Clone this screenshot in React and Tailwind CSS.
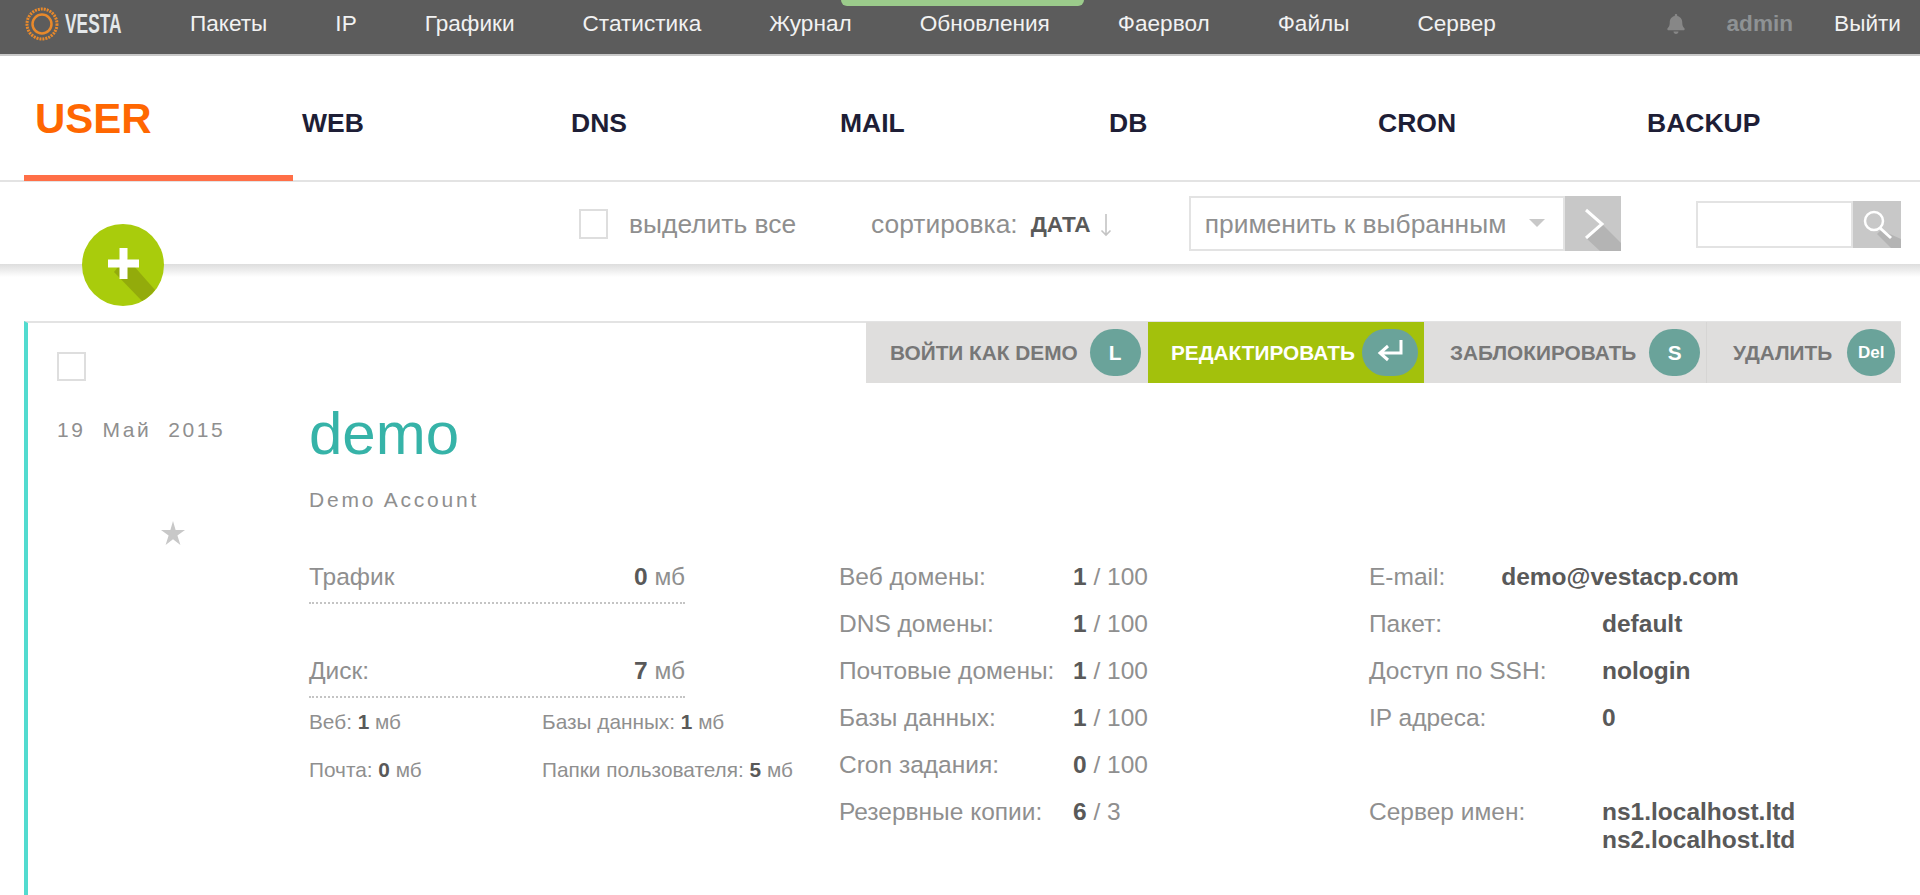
import { FaBell } from 'react-icons/fa';

const navItems = ['Пакеты', 'IP', 'Графики', 'Статистика', 'Журнал', 'Обновления', 'Фаервол', 'Файлы', 'Сервер'];
const tabs = ['WEB', 'DNS', 'MAIL', 'DB', 'CRON', 'BACKUP'];

const domains = [
  ['Веб домены:', '1', '100'],
  ['DNS домены:', '1', '100'],
  ['Почтовые домены:', '1', '100'],
  ['Базы данных:', '1', '100'],
  ['Cron задания:', '0', '100'],
  ['Резервные копии:', '6', '3'],
];

function Logo() {
  return (
    <div className="flex items-center w-[164px] pl-[25px] shrink-0">
      <svg width="34" height="34" viewBox="0 0 34 34" className="shrink-0">
        <circle cx="17" cy="17" r="15" fill="none" stroke="#e8892b" strokeWidth="3" strokeDasharray="2 1" />
        <circle cx="17" cy="17" r="9.5" fill="none" stroke="#e8892b" strokeWidth="2.5" />
      </svg>
      <span className="ml-[6px] text-[28px] leading-none font-bold text-[#e4e8ea] origin-left scale-x-[0.62]">VESTA</span>
    </div>
  );
}

function Header() {
  return (
    <div className="relative flex items-center h-[56px] pb-[6px] bg-[#5c5c5c] border-b-2 border-[#c9c9c9] text-[22.6px] text-[#f2f2f2]">
      <Logo />
      <div className="flex gap-[68px] ml-[26px]">
        {navItems.map((item) => (
          <span key={item}>{item}</span>
        ))}
      </div>
      <div className="flex items-center ml-auto pr-[19px]">
        <FaBell className="text-[20px] text-[#878787]" />
        <span className="ml-[41px] font-bold text-[#8e9294]">admin</span>
        <span className="ml-[41px]">Выйти</span>
      </div>
      <div className="absolute left-[841px] top-0 w-[243px] h-[6px] bg-[#9bcb8b] rounded-b-[6px]" />
    </div>
  );
}

function Tabs() {
  return (
    <div className="flex h-[126px] pl-[24px] border-b-2 border-[#e3e3e3]">
      <div className="flex items-center w-[269px] h-[125px] pl-[11px] pt-[6px] border-b-[6px] border-[#ff6f47] text-[42px] font-bold text-[#ff6701]">
        USER
      </div>
      {tabs.map((tab) => (
        <div key={tab} className="flex items-center w-[269px] pl-[9px] pt-[11px] text-[26.5px] font-bold text-[#1e1e36]">
          {tab}
        </div>
      ))}
    </div>
  );
}

function Toolbar() {
  return (
    <div className="relative">
      <div className="flex items-center h-[82px] pl-[579px] text-[26.4px] text-[#8f8f8f]">
        <div className="w-[29px] h-[30px] mt-[2px] border-2 border-[#dedede]" />
        <span className="ml-[21px] mt-[4px]">выделить все</span>
        <span className="ml-[75px] mt-[4px]">сортировка:</span>
        <span className="ml-[13px] mt-[4px] text-[22.6px] font-bold text-[#595959]">ДАТА</span>
        <svg width="14" height="26" viewBox="0 0 14 26" className="ml-[8px] mt-[4px]">
          <path d="M7 2v21M2.5 18.5 7 23l4.5-4.5" fill="none" stroke="#c4c4c4" strokeWidth="1.6" />
        </svg>
        <div className="flex items-center justify-between w-[376px] h-[55px] ml-[76px] pl-[14px] pr-[18px] border-2 border-[#e3e3e3]">
          <span className="mt-[4px]">применить к выбранным</span>
          <span className="w-0 h-0 border-x-[8px] border-x-transparent border-t-[8px] border-t-[#c8c8c8]" />
        </div>
        <svg width="56" height="55" viewBox="0 0 56 55" className="shrink-0">
          <rect width="56" height="55" fill="#c8c8c8" />
          <path d="M37 28 56 47V55H35L21 42Z" fill="#b4b4b4" />
          <path d="M21 14 37 28 21 42" fill="none" stroke="#fff" strokeWidth="3" />
        </svg>
        <div className="w-[157px] h-[47px] ml-[75px] mt-[2px] border-2 border-[#e3e3e3]" />
        <svg width="48" height="47" viewBox="0 0 48 47" className="shrink-0 mt-[2px]">
          <rect width="48" height="47" fill="#c8c8c8" />
          <path d="M28 29 48 38V47H38L24 33Z" fill="#b4b4b4" />
          <circle cx="21" cy="20" r="9" fill="none" stroke="#fff" strokeWidth="2.5" />
          <path d="M27 27 38 37" stroke="#fff" strokeWidth="3" />
        </svg>
      </div>
      <div className="h-[13px] bg-gradient-to-b from-[#dddddd] to-white" />
      <div className="absolute left-[82px] top-[42px] w-[82px] h-[82px]">
        <svg width="82" height="82" viewBox="0 0 82 82">
          <circle cx="41" cy="41" r="41" fill="#a9cc0c" />
          <path d="M44 33 73 66A41 41 0 0 1 60 77L32 48Z" fill="#93ab0b" />
          <path d="M37.5 24h8v11.5H57v8H45.5V55h-8V43.5H26v-8h11.5Z" fill="#fff" />
        </svg>
      </div>
    </div>
  );
}

function ActionButton({ label, badge, active, className, badgeClass }) {
  return (
    <div className={`flex items-center h-[61px] text-[20.8px] font-bold ${active ? 'bg-[#a3c10c] text-white' : 'text-[#777777]'} ${className}`}>
      <span>{label}</span>
      <span className={`flex items-center justify-center h-[47px] rounded-full bg-[#6aa39a] text-white ${badgeClass}`}>
        {badge}
      </span>
    </div>
  );
}

function Actions() {
  return (
    <div className="absolute right-0 top-[-1px] flex h-[61px] bg-[#dfdedd]">
      <ActionButton label="ВОЙТИ КАК DEMO" badge="L" className="w-[282px] pl-[24px]" badgeClass="w-[51px] ml-[12px]" />
      <ActionButton
        label="РЕДАКТИРОВАТЬ"
        active
        className="w-[276px] pl-[23px]"
        badgeClass="w-[56px] ml-[7px]"
        badge={
          <svg width="52" height="47" viewBox="0 0 52 47">
            <path d="M37 11v13H17M24 17l-8 7 8 7" fill="none" stroke="#fff" strokeWidth="3" />
          </svg>
        }
      />
      <ActionButton label="ЗАБЛОКИРОВАТЬ" badge="S" className="w-[283px] pl-[26px] border-r border-[#d6d5d4]" badgeClass="w-[51px] ml-[13px]" />
      <ActionButton label="УДАЛИТЬ" badge={<span className="text-[17px]">Del</span>} className="w-[194px] pl-[26px]" badgeClass="w-[48px] ml-[15px]" />
    </div>
  );
}

function UsageRow({ label, value }) {
  return (
    <div className="flex justify-between h-[41px] border-b-2 border-dotted border-[#c4c4c4] text-[#8f8f8f]">
      <span>{label}</span>
      <span>
        <b className="text-[#595959]">{value}</b> мб
      </span>
    </div>
  );
}

function SmallStat({ label, value }) {
  return (
    <span>
      {label}: <b className="text-[#595959]">{value}</b> мб
    </span>
  );
}

function InfoRow({ label, value }) {
  return (
    <div className="relative h-[47px]">
      <span>{label}</span>
      <b className="absolute left-[233px] top-0 text-[#595959]">{value}</b>
    </div>
  );
}

function UserCard() {
  return (
    <div className="relative flex flex-1 ml-[24px] mr-[19px] border-l-4 border-t-2 border-l-[#52dbcf] border-t-[#e3e3e3]">
      <Actions />
      <div className="w-[281px] pl-[29px] pt-[29px] shrink-0 text-[#8f8f8f]">
        <div className="w-[29px] h-[29px] border-2 border-[#dedede]" />
        <div className="mt-[36px] text-[21px] leading-[26px] tracking-[2.6px] whitespace-pre">19  Май  2015</div>
        <svg width="24" height="24" viewBox="0 0 24 24" className="mt-[78px] ml-[104px]">
          <path d="M12 0 14.6 9 24 9 16.4 14.6 19.4 24 12 18.2 4.6 24 7.6 14.6 0 9 9.4 9Z" fill="#c8c8c8" />
        </svg>
      </div>
      <div className="flex-1 pt-[76px] text-[24.5px] leading-[28px] text-[#8f8f8f]">
        <div className="text-[60px] leading-[70px] text-[#36b3a8]">demo</div>
        <div className="mt-[17px] text-[21px] leading-[28px] tracking-[2.8px]">Demo Account</div>
        <div className="flex mt-[49px]">
          <div className="w-[376px] shrink-0">
            <UsageRow label="Трафик" value="0" />
            <div className="h-[53px]" />
            <UsageRow label="Диск:" value="7" />
            <div className="grid grid-cols-[233px_1fr] mt-[10px] w-[500px] text-[20.8px] leading-[28px] gap-y-[20px]">
              <SmallStat label="Веб" value="1" />
              <SmallStat label="Базы данных" value="1" />
              <SmallStat label="Почта" value="0" />
              <SmallStat label="Папки пользователя" value="5" />
            </div>
          </div>
          <div className="w-[530px] ml-[154px] shrink-0">
            {domains.map(([label, used, total]) => (
              <div key={label} className="relative h-[47px]">
                <span>{label}</span>
                <span className="absolute left-[234px] top-0">
                  <b className="text-[#595959]">{used}</b> / {total}
                </span>
              </div>
            ))}
          </div>
          <div className="flex-1">
            <div className="h-[47px]">
              <span>E-mail:</span>
              <b className="ml-[56px] text-[#595959]">demo@vestacp.com</b>
            </div>
            <InfoRow label="Пакет:" value="default" />
            <InfoRow label="Доступ по SSH:" value="nologin" />
            <InfoRow label="IP адреса:" value="0" />
            <div className="h-[47px]" />
            <div className="relative">
              <span>Сервер имен:</span>
              <b className="absolute left-[233px] top-0 text-[#595959]">
                ns1.localhost.ltd
                <br />
                ns2.localhost.ltd
              </b>
            </div>
          </div>
        </div>
      </div>
    </div>
  );
}

export default function App() {
  return (
    <div className="flex flex-col h-[895px] overflow-hidden bg-white font-['Liberation_Sans',Arial,sans-serif]">
      <Header />
      <Tabs />
      <Toolbar />
      <div className="h-[44px] shrink-0" />
      <UserCard />
    </div>
  );
}
